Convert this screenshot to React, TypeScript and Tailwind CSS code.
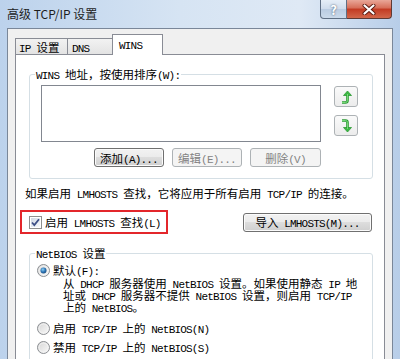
import type { ReactNode } from "react"

// splits a string so ascii runs get the narrow mono face like SimSun's half-width glyphs
function Txt({ s }: { s: string }) {
  const parts = s.split(/([\x20-\x7e]+)/)
  return (
    <span className="whitespace-pre">
      {parts.map((p, i) =>
        /^[\x20-\x7e]+$/.test(p) ? (
          <span key={i} className="font-['Liberation_Mono',monospace] text-[11px] leading-[8px] tracking-[-0.8px]">
            {p}
          </span>
        ) : (
          p
        )
      )}
    </span>
  )
}

function Button({ label, width, disabled }: { label: string; width: string; disabled?: boolean }) {
  return (
    <div
      className={
        disabled
          ? `${width} h-[19px] flex items-center justify-center rounded-[3px] border border-[#adb2b5] bg-[#f4f4f4] text-[#838383] leading-[14px]`
          : `${width} h-[19px] flex items-center justify-center rounded-[3px] border border-[#707070] bg-[linear-gradient(#f2f2f2_0%,#ebebeb_50%,#dddddd_50%,#cfcfcf_100%)] shadow-[inset_0_0_0_1px_#fbfbfb] leading-[14px]`
      }
    >
      <Txt s={label} />
    </div>
  )
}

function Radio({ checked }: { checked?: boolean }) {
  return (
    <svg width="13" height="13" viewBox="0 0 13 13" className="shrink-0">
      <defs>
        <linearGradient id="rg" x1="0" y1="0" x2="1" y2="1">
          <stop offset="0" stopColor="#d4d4d4" />
          <stop offset="1" stopColor="#fbfbfb" />
        </linearGradient>
        <radialGradient id="rd" cx="0.4" cy="0.35" r="0.7">
          <stop offset="0" stopColor="#8ad0f5" />
          <stop offset="0.6" stopColor="#2a6fb0" />
          <stop offset="1" stopColor="#1c4f80" />
        </radialGradient>
      </defs>
      <circle cx="6.5" cy="6.5" r="6" fill="url(#rg)" stroke="#8c8f93" />
      <circle cx="6.5" cy="6.5" r="4.5" fill="none" stroke="#f4f4f4" strokeWidth="0.8" />
      {checked && <circle cx="6.5" cy="6.5" r="3" fill="url(#rd)" />}
    </svg>
  )
}

function Checkbox() {
  return (
    <svg width="13" height="13" viewBox="0 0 13 13" className="shrink-0">
      <defs>
        <linearGradient id="cg" x1="0" y1="0" x2="1" y2="1">
          <stop offset="0" stopColor="#cfd7e4" />
          <stop offset="1" stopColor="#f7f9fc" />
        </linearGradient>
      </defs>
      <rect x="0.5" y="0.5" width="12" height="12" fill="#fff" stroke="#8e8f8f" />
      <rect x="2" y="2" width="9" height="9" fill="url(#cg)" />
      <path d="M3 6.5 L5.3 9 L10 3.2" fill="none" stroke="#3d4f86" strokeWidth="1.8" />
    </svg>
  )
}

function ArrowButton({ children }: { children: ReactNode }) {
  return (
    <div className="w-[24px] h-[21px] flex items-center justify-center rounded-[3px] border border-[#adb2b5] bg-[linear-gradient(#fafafa,#ececec)]">
      {children}
    </div>
  )
}

export default function App() {
  return (
    <div className="w-[400px] h-[359px] overflow-hidden flex flex-col bg-[linear-gradient(90deg,#bcd2ec,#d6e4f3_45%,#dfe9f5_75%,#b7cde8)] font-['Noto_Sans_CJK_SC',sans-serif] text-black text-[11.5px]">
      {/* title bar */}
      <div className="h-[28px] shrink-0 flex items-start">
        <div className="pl-[7px] pt-[6px] text-[12px] leading-[16px] text-[#1e1e1e]">高级 TCP/IP 设置</div>
        <div className="ml-auto mr-[8px] flex">
          <div className="w-[27px] h-[19px] flex items-center justify-center border border-t-0 border-[#5f6f84] rounded-bl-[4px] bg-[linear-gradient(#e6eef7,#cfdcec_50%,#b9cbe1_50%,#cbdaeb)] text-white font-bold text-[13px] leading-none [text-shadow:0_0_2px_#3a4a60]">
            ?
          </div>
          <div className="w-[45px] h-[19px] flex items-center justify-center border border-t-0 border-l-0 border-[#5f3a34] rounded-br-[4px] bg-[linear-gradient(#e9a798,#d66d57_45%,#c23a22_50%,#d2674a)]">
            <svg width="14" height="11" viewBox="0 0 14 11">
              <path d="M2.5 1.5 L11.5 9.5 M11.5 1.5 L2.5 9.5" stroke="#5a1a10" strokeWidth="4" strokeLinecap="round" />
              <path d="M2.5 1.5 L11.5 9.5 M11.5 1.5 L2.5 9.5" stroke="#fff" strokeWidth="2.2" strokeLinecap="round" />
            </svg>
          </div>
        </div>
      </div>

      {/* dialog body */}
      <div className="flex-1 mx-[7px] border-x border-t border-[#7a8799] bg-[#f0f0f0] px-[7px] pt-[5px] flex flex-col min-h-0">
        <div className="h-[20px] flex items-end shrink-0">
          <div className="w-[52px] h-[16px] flex items-center pl-[3px] border-l border-t border-[#898c95] bg-[linear-gradient(#f2f2f2,#e3e3e3)] leading-[14px]">
            <Txt s="IP 设置" />
          </div>
          <div className="w-[45px] h-[16px] flex items-center pl-[4px] border-l border-t border-[#898c95] bg-[linear-gradient(#f2f2f2,#e3e3e3)] leading-[14px]">
            <Txt s="DNS" />
          </div>
          <div className="relative z-10 -mb-[1px] w-[51px] h-[21px] flex items-center pl-[6px] pb-[3px] border-x border-t border-[#898c95] bg-white leading-[14px]">
            <Txt s="WINS" />
          </div>
        </div>

        <div className="flex-1 border border-[#898c95] bg-white flex flex-col leading-[14px]">
          <fieldset className="mt-[12px] ml-[13px] mr-[11px] border border-[#d5dfe5] rounded-[3px]">
            <legend className="ml-[5px] px-[1px] leading-[14px]">
              <Txt s="WINS 地址，按使用排序(W):" />
            </legend>
            <div className="pl-[11px] pt-[4px] pb-[11px]">
              <div className="flex items-start">
                <div className="w-[280px] h-[57px] border border-[#828790] bg-white" />
                <div className="ml-[13px] mt-[1px] flex flex-col gap-[8px]">
                  <ArrowButton>
                    <svg width="12" height="14" viewBox="0 0 12 14">
                      <path d="M2 12.5 H5.5 Q7.5 12.5 7.5 10.5 V4" fill="none" stroke="#2c9a34" strokeWidth="2.6" />
                      <path d="M3.5 5.5 L7.5 1 L11.5 5.5 Z" fill="#3cb743" stroke="#2c9a34" strokeWidth="0.8" />
                      <path d="M2 12.5 H5.5 Q7.5 12.5 7.5 10.5 V4" fill="none" stroke="#7fe07f" strokeWidth="0.9" />
                    </svg>
                  </ArrowButton>
                  <ArrowButton>
                    <svg width="12" height="14" viewBox="0 0 12 14">
                      <path d="M2 1.5 H5.5 Q7.5 1.5 7.5 3.5 V10" fill="none" stroke="#2c9a34" strokeWidth="2.6" />
                      <path d="M3.5 8.5 L7.5 13 L11.5 8.5 Z" fill="#3cb743" stroke="#2c9a34" strokeWidth="0.8" />
                      <path d="M2 1.5 H5.5 Q7.5 1.5 7.5 3.5 V10" fill="none" stroke="#7fe07f" strokeWidth="0.9" />
                    </svg>
                  </ArrowButton>
                </div>
              </div>
              <div className="w-[280px] mt-[6px] flex justify-end gap-[8px]">
                <Button label="添加(A)..." width="w-[70px]" />
                <Button label="编辑(E)..." width="w-[70px]" disabled />
                <Button label="删除(V)" width="w-[71px]" disabled />
              </div>
            </div>
          </fieldset>

          <div className="mt-[7px] ml-[9px] h-[14px]">
            <Txt s="如果启用 LMHOSTS 查找，它将应用于所有启用 TCP/IP 的连接。" />
          </div>

          <div className="mt-[10px] ml-[4px] mr-[12px] flex items-center justify-between">
            <div className="w-[148px] h-[24px] border-2 border-[#e3262b] flex items-center pl-[7px] gap-[3px]">
              <Checkbox />
              <Txt s="启用 LMHOSTS 查找(L)" />
            </div>
            <Button label="导入 LMHOSTS(M)..." width="w-[129px]" />
          </div>

          <fieldset className="mt-[12px] ml-[13px] mr-[11px] border border-[#d5dfe5] rounded-[3px]">
            <legend className="ml-[5px] px-[1px] leading-[14px]">
              <Txt s="NetBIOS 设置" />
            </legend>
            <div className="pl-[7px] pt-[3px] pb-[10px]">
              <div className="flex items-center gap-[3px] h-[14px]">
                <Radio checked />
                <Txt s="默认(F):" />
              </div>
              <div className="pl-[26px] leading-[12px]">
                <div className="h-[12px]">
                  <Txt s="从 DHCP 服务器使用 NetBIOS 设置。如果使用静态 IP 地" />
                </div>
                <div className="h-[12px]">
                  <Txt s="址或 DHCP 服务器不提供 NetBIOS 设置，则启用 TCP/IP" />
                </div>
                <div className="h-[12px]">
                  <Txt s="上的 NetBIOS。" />
                </div>
              </div>
              <div className="mt-[8px] flex items-center gap-[3px] h-[14px]">
                <Radio />
                <Txt s="启用 TCP/IP 上的 NetBIOS(N)" />
              </div>
              <div className="mt-[5px] flex items-center gap-[3px] h-[14px]">
                <Radio />
                <Txt s="禁用 TCP/IP 上的 NetBIOS(S)" />
              </div>
            </div>
          </fieldset>
        </div>
      </div>
    </div>
  )
}
